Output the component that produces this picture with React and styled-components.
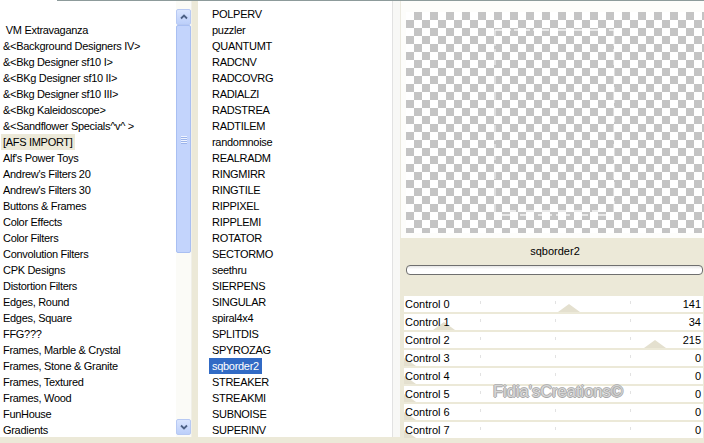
import React from "react";
import styled, { createGlobalStyle } from "styled-components";

const Global = createGlobalStyle`
  html, body { margin: 0; padding: 0; background: #ece9d8; overflow: hidden; }
  * { box-sizing: border-box; }
`;

const Root = styled.div`
  width: 704px;
  height: 443px;
  background: #ece9d8;
  display: flex;
  flex-direction: column;
  font-family: "Liberation Sans", Arial, sans-serif;
  font-size: 11px;
  color: #000;
  overflow: hidden;
`;

const TopRule = styled.div`
  height: 1px;
  background: #fff;
  display: flex;
  &::after {
    content: "";
    margin-left: 57px;
    flex: 1;
    background: #8d9b9b;
  }
`;

const Body = styled.div`
  display: flex;
  align-items: flex-start;
  flex: 1;
`;

const List = styled.div`
  width: ${(p) => p.$w}px;
  height: 436px;
  background: #fff;
  overflow: hidden;
  padding-top: ${(p) => p.$top}px;
  padding-left: ${(p) => p.$left}px;
  border-right: ${(p) => (p.$edge ? "1px solid #e2e2e2" : "none")};
  letter-spacing: -0.3px;
`;

const Row = styled.div`
  height: 16px;
  line-height: 16px;
  white-space: pre;
`;

const Label = styled.span`
  display: inline-block;
  height: 16px;
  padding: 0 ${(p) => p.$pad}px;
  background: ${(p) =>
    p.$sel === "active" ? "#316ac5" : p.$sel === "inactive" ? "#ece9d8" : "transparent"};
  color: ${(p) => (p.$sel === "active" ? "#fff" : "#000")};
`;

const ScrollBar = styled.div`
  width: 16px;
  height: 436px;
  background: #fbfbf7;
  border-right: 1px solid #f0efe8;
  display: flex;
  flex-direction: column;
  padding-top: 8px;
  padding-bottom: 2px;
`;

const ArrowButton = styled.div`
  height: 16px;
  width: 15px;
  border: 1px solid #b7c9f3;
  border-radius: 2px;
  background: linear-gradient(#dae5fe, #bccffa);
  display: flex;
  align-items: center;
  justify-content: center;
`;

const Thumb = styled.div`
  height: 228px;
  width: 15px;
  border: 1px solid #a9bff2;
  border-radius: 2px;
  background: #c3d4fc;
  display: flex;
  flex-direction: column;
  align-items: center;
  justify-content: center;
  gap: 1px;
`;

const Grip = styled.div`
  width: 6px;
  height: 1px;
  background: #eef3ff;
  box-shadow: 0 1px 0 #9cb4ea;
`;

const Track = styled.div`
  flex: 1;
`;

const Gutter = styled.div`
  width: 6px;
  height: 436px;
  background: #ece9d8;
`;

const Strip = styled.div`
  width: 7px;
  height: 436px;
  background: #f8f8f6;
`;

const RightCol = styled.div`
  width: 304px;
  height: 442px;
  display: flex;
  flex-direction: column;
  background: #ece9d8;
`;

const PreviewPanel = styled.div`
  background: #fdfdfb;
  border-left: 1px solid #ebe9df;
  padding: 11px 0 5px 5px;
`;

const Checker = styled.div`
  position: relative;
  height: 221px;
  background-color: #fff;
  background-image: conic-gradient(
    #c4c4c4 25%,
    transparent 0 50%,
    #c4c4c4 0 75%,
    transparent 0
  );
  background-size: 16px 16px;
`;

const PreviewArt = styled.svg`
  position: absolute;
  left: 0;
  top: 0;
`;

const NameLabel = styled.div`
  margin-top: 5px;
  height: 16px;
  line-height: 16px;
  padding-left: 6px;
  text-align: center;
  font-size: 11px;
`;

const Progress = styled.div`
  margin: 6px 1px 0 6px;
  height: 10px;
  border: 1px solid #6f6f6f;
  border-radius: 4px;
  background: linear-gradient(#e6e6e6, #fff 40%);
`;

const Controls = styled.div`
  position: relative;
  margin: 21px 1px 0 4px;
  display: flex;
  flex-direction: column;
  gap: 2px;
`;

const ControlRow = styled.div`
  position: relative;
  height: 16px;
  line-height: 16px;
  background: #fff;
  overflow: hidden;
  display: flex;
  justify-content: space-between;
  padding: 0 2px 0 1px;
`;

const RowText = styled.span`
  position: relative;
  z-index: 1;
`;

const Tick = styled.div`
  position: absolute;
  top: 5px;
  width: 1px;
  height: 3px;
  background: #e2e2e2;
`;

const SliderThumb = styled.div`
  position: absolute;
  bottom: 0;
  width: 0;
  height: 0;
  margin-left: -11px;
  border-left: 11px solid transparent;
  border-right: 11px solid transparent;
  border-bottom: 8px solid #e4e0cf;
`;

const Watermark = styled.div`
  position: absolute;
  left: 89px;
  top: 86px;
  font-family: "Liberation Sans", Arial, sans-serif;
  font-size: 16.5px;
  color: #d6d6d6;
  text-shadow: -1px 0 0 #aaaaaa, 1px 0 0 #aaaaaa, 0 -1px 0 #b5b5b5, 0 1px 0 #a5a5a5;
  pointer-events: none;
  z-index: 2;
`;

const Chevron = ({ down }) => (
  <svg width="8" height="6" viewBox="0 0 8 6">
    <path
      d={down ? "M1 1.5 L4 4.5 L7 1.5" : "M1 4.5 L4 1.5 L7 4.5"}
      fill="none"
      stroke="#4d6185"
      strokeWidth="1.8"
    />
  </svg>
);

const leftItems = [
  " VM Extravaganza",
  "&<Background Designers IV>",
  "&<Bkg Designer sf10 I>",
  "&<BKg Designer sf10 II>",
  "&<Bkg Designer sf10 III>",
  "&<Bkg Kaleidoscope>",
  "&<Sandflower Specials^v^ >",
  "[AFS IMPORT]",
  "Alf's Power Toys",
  "Andrew's Filters 20",
  "Andrew's Filters 30",
  "Buttons & Frames",
  "Color Effects",
  "Color Filters",
  "Convolution Filters",
  "CPK Designs",
  "Distortion Filters",
  "Edges, Round",
  "Edges, Square",
  "FFG???",
  "Frames, Marble & Crystal",
  "Frames, Stone & Granite",
  "Frames, Textured",
  "Frames, Wood",
  "FunHouse",
  "Gradients",
];

const midItems = [
  "POLPERV",
  "puzzler",
  "QUANTUMT",
  "RADCNV",
  "RADCOVRG",
  "RADIALZI",
  "RADSTREA",
  "RADTILEM",
  "randomnoise",
  "REALRADM",
  "RINGMIRR",
  "RINGTILE",
  "RIPPIXEL",
  "RIPPLEMI",
  "ROTATOR",
  "SECTORMO",
  "seethru",
  "SIERPENS",
  "SINGULAR",
  "spiral4x4",
  "SPLITDIS",
  "SPYROZAG",
  "sqborder2",
  "STREAKER",
  "STREAKMI",
  "SUBNOISE",
  "SUPERINV",
];

const controls = [141, 34, 215, 0, 0, 0, 0, 0];

export default function App() {
  return (
    <Root>
      <Global />
      <TopRule />
      <Body>
        <List $w={176} $top={21} $left={1}>
          {leftItems.map((t) => (
            <Row key={t}>
              <Label $pad={2} $sel={t === "[AFS IMPORT]" ? "inactive" : null}>
                {t}
              </Label>
            </Row>
          ))}
        </List>
        <ScrollBar>
          <ArrowButton>
            <Chevron />
          </ArrowButton>
          <Thumb>
            <Grip />
            <Grip />
            <Grip />
            <Grip />
          </Thumb>
          <Track />
          <ArrowButton>
            <Chevron down />
          </ArrowButton>
        </ScrollBar>
        <Gutter />
        <List $w={195} $top={5} $left={11} $edge>
          {midItems.map((t) => (
            <Row key={t}>
              <Label $pad={3} $sel={t === "sqborder2" ? "active" : null}>
                {t}
              </Label>
            </Row>
          ))}
        </List>
        <Strip />
        <RightCol>
          <PreviewPanel>
            <Checker>
              <PreviewArt width="299" height="221" viewBox="0 0 299 221">
                <g stroke="#fff" strokeWidth="1.5" fill="none" opacity="0.85">
                  <path d="M89 18 H208" strokeDasharray="16 3" />
                  <path d="M89 18 V200" strokeDasharray="16 3" opacity="0.7" />
                  <path d="M208 18 V200" strokeDasharray="16 3" opacity="0.7" />
                  <path d="M96 199 H204" strokeDasharray="14 4" />
                  <path d="M96 203 H204" strokeDasharray="14 4" />
                </g>
              </PreviewArt>
            </Checker>
          </PreviewPanel>
          <NameLabel>sqborder2</NameLabel>
          <Progress />
          <Controls>
            {controls.map((v, i) => (
              <ControlRow key={i}>
                <Tick style={{ left: 76 }} />
                <Tick style={{ left: 151 }} />
                <Tick style={{ left: 226 }} />
                <SliderThumb style={{ left: 1 + (v / 255) * 296 }} />
                <RowText>Control {i}</RowText>
                <RowText>{v}</RowText>
              </ControlRow>
            ))}
            <Watermark>Fidia'sCreations©</Watermark>
          </Controls>
        </RightCol>
      </Body>
    </Root>
  );
}
